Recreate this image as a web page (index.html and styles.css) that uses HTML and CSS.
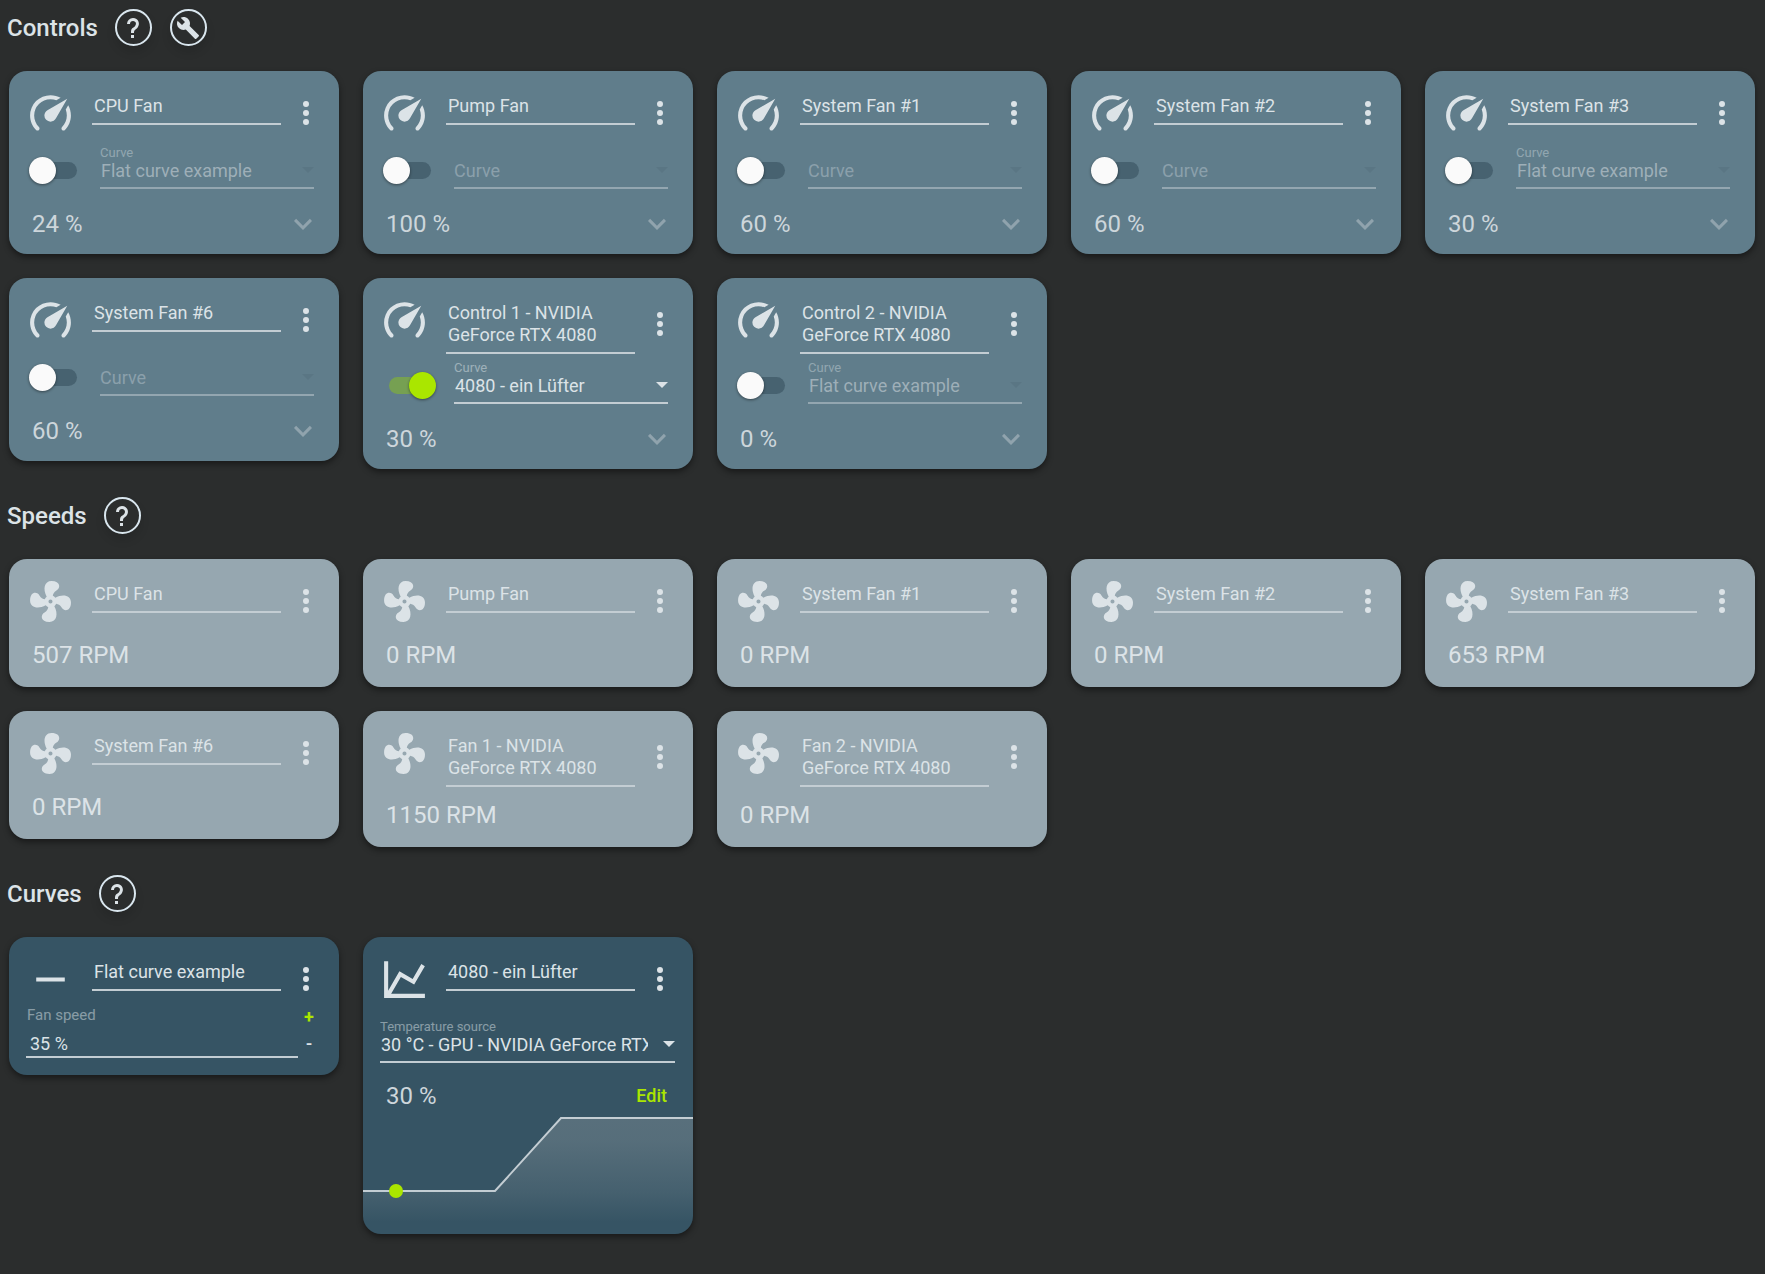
FILE: index.html
```html
<!DOCTYPE html>
<html lang="en">
<head>
<meta charset="utf-8">
<meta name="viewport" content="width=device-width, initial-scale=1">
<title>Fan Control</title>
<link rel="stylesheet" href="styles.css">
</head>
<body>
<svg class="sprite" aria-hidden="true">
  <symbol id="gauge" viewBox="0 0 24 24"><path d="M12,16A3,3 0 0,1 9,13C9,11.88 9.61,10.9 10.5,10.39L20.21,4.77L14.68,14.35C14.18,15.33 13.17,16 12,16M12,3C13.81,3 15.5,3.5 16.97,4.32L14.87,5.53C14,5.19 13,5 12,5A8,8 0 0,0 4,13C4,15.21 4.89,17.21 6.34,18.65H6.35C6.74,19.04 6.74,19.67 6.35,20.06C5.96,20.45 5.32,20.45 4.93,20.07V20.07C3.12,18.26 2,15.76 2,13A10,10 0 0,1 12,3M22,13C22,15.76 20.88,18.26 19.07,20.07V20.07C18.68,20.45 18.05,20.45 17.66,20.06C17.27,19.67 17.27,19.04 17.66,18.65V18.65C19.11,17.2 20,15.21 20,13C20,12 19.81,11 19.46,10.1L20.67,8C21.5,9.5 22,11.18 22,13Z"/></symbol>
  <symbol id="fan" viewBox="0 0 24 24"><path d="M12,11A1,1 0 0,0 11,12A1,1 0 0,0 12,13A1,1 0 0,0 13,12A1,1 0 0,0 12,11M12.5,2C17,2 17.11,5.57 14.75,6.75C13.76,7.24 13.32,8.29 13.13,9.22C13.61,9.42 14.03,9.73 14.35,10.13C18.05,8.13 22.03,8.92 22.03,12.5C22.03,17 18.46,17.1 17.28,14.73C16.78,13.74 15.72,13.3 14.79,13.11C14.59,13.59 14.28,14 13.88,14.34C15.87,18.03 15.08,22 11.5,22C7,22 6.91,18.42 9.27,17.24C10.25,16.75 10.69,15.71 10.89,14.79C10.4,14.59 9.97,14.27 9.65,13.87C5.96,15.85 2,15.07 2,11.5C2,7 5.56,6.89 6.74,9.26C7.24,10.25 8.29,10.68 9.22,10.87C9.41,10.39 9.73,9.97 10.14,9.65C8.15,5.96 8.94,2 12.5,2Z"/></symbol>
  <symbol id="chart" viewBox="0 0 24 24"><path d="M16,11.78L20.24,4.45L21.97,5.45L16.74,14.5L10.23,10.75L5.46,19H22V21H2V3H4V17.54L9.5,8L16,11.78Z"/></symbol>
  <symbol id="flat" viewBox="0 0 24 24"><path d="M19,13H5V11H19V13Z"/></symbol>
  <symbol id="dots" viewBox="0 0 24 24"><path d="M12,16A2,2 0 0,1 14,18A2,2 0 0,1 12,20A2,2 0 0,1 10,18A2,2 0 0,1 12,16M12,10A2,2 0 0,1 14,12A2,2 0 0,1 12,14A2,2 0 0,1 10,12A2,2 0 0,1 12,10M12,4A2,2 0 0,1 14,6A2,2 0 0,1 12,8A2,2 0 0,1 10,6A2,2 0 0,1 12,4Z"/></symbol>
  <symbol id="chevron" viewBox="0 0 24 24"><path d="M7.41,8.58L12,13.17L16.59,8.58L18,10L12,16L6,10L7.41,8.58Z"/></symbol>
  <symbol id="help" viewBox="0 0 24 24"><path d="M10,19H13V22H10V19M12,2C17.35,2.22 19.68,7.62 16.5,11.67C15.67,12.67 14.33,13.33 13.67,14.17C13,15 13,16 13,17H10C10,15.33 10,13.92 10.67,12.92C11.33,11.92 12.67,11.33 13.5,10.67C15.92,8.43 15.32,5.26 12,5A3,3 0 0,0 9,8H6A6,6 0 0,1 12,2Z"/></symbol>
  <symbol id="wrench" viewBox="0 0 24 24"><path d="M22.7,19L13.6,9.9C14.5,7.6 14,4.9 12.1,3C10.1,1 7.1,0.6 4.7,1.7L9,6L6,9L1.6,4.7C0.4,7.1 0.9,10.1 2.9,12.1C4.8,14 7.5,14.5 9.8,13.6L18.9,22.7C19.3,23.1 19.9,23.1 20.3,22.7L22.6,20.4C23.1,20 23.1,19.3 22.7,19Z"/></symbol>
</svg>

<main class="page">
  <section class="section">
    <header class="section-head">
      <h2>Controls</h2>
      <button class="round" type="button" aria-label="Help on controls"><svg><use href="#help"/></svg></button>
      <button class="round" type="button" aria-label="Set up controls"><svg><use href="#wrench"/></svg></button>
    </header>
    <div class="cards">
      <article class="card control">
        <div class="card-head">
          <svg class="kind"><use href="#gauge"/></svg>
          <textarea class="name" rows="1" aria-label="Name">CPU Fan</textarea>
          <button class="more" type="button" aria-label="More"><svg><use href="#dots"/></svg></button>
        </div>
        <div class="assign">
          <input class="toggle" type="checkbox" aria-label="Enable CPU Fan">
          <div class="field"><label for="c1">Curve</label><select id="c1" disabled><option>Flat curve example</option></select></div>
        </div>
        <div class="status"><output>24 %</output><button class="expand" type="button" aria-label="Expand"><svg><use href="#chevron"/></svg></button></div>
      </article>
      <article class="card control">
        <div class="card-head">
          <svg class="kind"><use href="#gauge"/></svg>
          <textarea class="name" rows="1" aria-label="Name">Pump Fan</textarea>
          <button class="more" type="button" aria-label="More"><svg><use href="#dots"/></svg></button>
        </div>
        <div class="assign">
          <input class="toggle" type="checkbox" aria-label="Enable Pump Fan">
          <div class="field empty"><select aria-label="Curve" disabled><option>Curve</option></select></div>
        </div>
        <div class="status"><output>100 %</output><button class="expand" type="button" aria-label="Expand"><svg><use href="#chevron"/></svg></button></div>
      </article>
      <article class="card control">
        <div class="card-head">
          <svg class="kind"><use href="#gauge"/></svg>
          <textarea class="name" rows="1" aria-label="Name">System Fan #1</textarea>
          <button class="more" type="button" aria-label="More"><svg><use href="#dots"/></svg></button>
        </div>
        <div class="assign">
          <input class="toggle" type="checkbox" aria-label="Enable System Fan #1">
          <div class="field empty"><select aria-label="Curve" disabled><option>Curve</option></select></div>
        </div>
        <div class="status"><output>60 %</output><button class="expand" type="button" aria-label="Expand"><svg><use href="#chevron"/></svg></button></div>
      </article>
      <article class="card control">
        <div class="card-head">
          <svg class="kind"><use href="#gauge"/></svg>
          <textarea class="name" rows="1" aria-label="Name">System Fan #2</textarea>
          <button class="more" type="button" aria-label="More"><svg><use href="#dots"/></svg></button>
        </div>
        <div class="assign">
          <input class="toggle" type="checkbox" aria-label="Enable System Fan #2">
          <div class="field empty"><select aria-label="Curve" disabled><option>Curve</option></select></div>
        </div>
        <div class="status"><output>60 %</output><button class="expand" type="button" aria-label="Expand"><svg><use href="#chevron"/></svg></button></div>
      </article>
      <article class="card control">
        <div class="card-head">
          <svg class="kind"><use href="#gauge"/></svg>
          <textarea class="name" rows="1" aria-label="Name">System Fan #3</textarea>
          <button class="more" type="button" aria-label="More"><svg><use href="#dots"/></svg></button>
        </div>
        <div class="assign">
          <input class="toggle" type="checkbox" aria-label="Enable System Fan #3">
          <div class="field"><label for="c5">Curve</label><select id="c5" disabled><option>Flat curve example</option></select></div>
        </div>
        <div class="status"><output>30 %</output><button class="expand" type="button" aria-label="Expand"><svg><use href="#chevron"/></svg></button></div>
      </article>
      <article class="card control">
        <div class="card-head">
          <svg class="kind"><use href="#gauge"/></svg>
          <textarea class="name" rows="1" aria-label="Name">System Fan #6</textarea>
          <button class="more" type="button" aria-label="More"><svg><use href="#dots"/></svg></button>
        </div>
        <div class="assign">
          <input class="toggle" type="checkbox" aria-label="Enable System Fan #6">
          <div class="field empty"><select aria-label="Curve" disabled><option>Curve</option></select></div>
        </div>
        <div class="status"><output>60 %</output><button class="expand" type="button" aria-label="Expand"><svg><use href="#chevron"/></svg></button></div>
      </article>
      <article class="card control">
        <div class="card-head">
          <svg class="kind"><use href="#gauge"/></svg>
          <textarea class="name" rows="2" aria-label="Name">Control 1 - NVIDIA GeForce RTX 4080</textarea>
          <button class="more" type="button" aria-label="More"><svg><use href="#dots"/></svg></button>
        </div>
        <div class="assign">
          <input class="toggle" type="checkbox" aria-label="Enable Control 1" checked>
          <div class="field"><label for="c7">Curve</label><select id="c7"><option>4080 - ein Lüfter</option><option>Flat curve example</option></select></div>
        </div>
        <div class="status"><output>30 %</output><button class="expand" type="button" aria-label="Expand"><svg><use href="#chevron"/></svg></button></div>
      </article>
      <article class="card control">
        <div class="card-head">
          <svg class="kind"><use href="#gauge"/></svg>
          <textarea class="name" rows="2" aria-label="Name">Control 2 - NVIDIA GeForce RTX 4080</textarea>
          <button class="more" type="button" aria-label="More"><svg><use href="#dots"/></svg></button>
        </div>
        <div class="assign">
          <input class="toggle" type="checkbox" aria-label="Enable Control 2">
          <div class="field"><label for="c8">Curve</label><select id="c8" disabled><option>Flat curve example</option></select></div>
        </div>
        <div class="status"><output>0 %</output><button class="expand" type="button" aria-label="Expand"><svg><use href="#chevron"/></svg></button></div>
      </article>
    </div>
  </section>

  <section class="section">
    <header class="section-head">
      <h2>Speeds</h2>
      <button class="round" type="button" aria-label="Help on speeds"><svg><use href="#help"/></svg></button>
    </header>
    <div class="cards">
      <article class="card speed">
        <div class="card-head">
          <svg class="kind"><use href="#fan"/></svg>
          <textarea class="name" rows="1" aria-label="Name">CPU Fan</textarea>
          <button class="more" type="button" aria-label="More"><svg><use href="#dots"/></svg></button>
        </div>
        <div class="status"><output>507 RPM</output></div>
      </article>
      <article class="card speed">
        <div class="card-head">
          <svg class="kind"><use href="#fan"/></svg>
          <textarea class="name" rows="1" aria-label="Name">Pump Fan</textarea>
          <button class="more" type="button" aria-label="More"><svg><use href="#dots"/></svg></button>
        </div>
        <div class="status"><output>0 RPM</output></div>
      </article>
      <article class="card speed">
        <div class="card-head">
          <svg class="kind"><use href="#fan"/></svg>
          <textarea class="name" rows="1" aria-label="Name">System Fan #1</textarea>
          <button class="more" type="button" aria-label="More"><svg><use href="#dots"/></svg></button>
        </div>
        <div class="status"><output>0 RPM</output></div>
      </article>
      <article class="card speed">
        <div class="card-head">
          <svg class="kind"><use href="#fan"/></svg>
          <textarea class="name" rows="1" aria-label="Name">System Fan #2</textarea>
          <button class="more" type="button" aria-label="More"><svg><use href="#dots"/></svg></button>
        </div>
        <div class="status"><output>0 RPM</output></div>
      </article>
      <article class="card speed">
        <div class="card-head">
          <svg class="kind"><use href="#fan"/></svg>
          <textarea class="name" rows="1" aria-label="Name">System Fan #3</textarea>
          <button class="more" type="button" aria-label="More"><svg><use href="#dots"/></svg></button>
        </div>
        <div class="status"><output>653 RPM</output></div>
      </article>
      <article class="card speed">
        <div class="card-head">
          <svg class="kind"><use href="#fan"/></svg>
          <textarea class="name" rows="1" aria-label="Name">System Fan #6</textarea>
          <button class="more" type="button" aria-label="More"><svg><use href="#dots"/></svg></button>
        </div>
        <div class="status"><output>0 RPM</output></div>
      </article>
      <article class="card speed">
        <div class="card-head">
          <svg class="kind"><use href="#fan"/></svg>
          <textarea class="name" rows="2" aria-label="Name">Fan 1 - NVIDIA GeForce RTX 4080</textarea>
          <button class="more" type="button" aria-label="More"><svg><use href="#dots"/></svg></button>
        </div>
        <div class="status"><output>1150 RPM</output></div>
      </article>
      <article class="card speed">
        <div class="card-head">
          <svg class="kind"><use href="#fan"/></svg>
          <textarea class="name" rows="2" aria-label="Name">Fan 2 - NVIDIA GeForce RTX 4080</textarea>
          <button class="more" type="button" aria-label="More"><svg><use href="#dots"/></svg></button>
        </div>
        <div class="status"><output>0 RPM</output></div>
      </article>
    </div>
  </section>

  <section class="section">
    <header class="section-head">
      <h2>Curves</h2>
      <button class="round" type="button" aria-label="Help on curves"><svg><use href="#help"/></svg></button>
    </header>
    <div class="cards">
      <article class="card curve">
        <div class="card-head">
          <svg class="kind"><use href="#flat"/></svg>
          <textarea class="name" rows="1" aria-label="Name">Flat curve example</textarea>
          <button class="more" type="button" aria-label="More"><svg><use href="#dots"/></svg></button>
        </div>
        <div class="amount">
          <div class="amount-field"><label for="flat-speed">Fan speed</label><input id="flat-speed" type="text" value="35 %"></div>
          <div class="steps">
            <button class="step up" type="button" aria-label="Increase">+</button>
            <button class="step" type="button" aria-label="Decrease">-</button>
          </div>
        </div>
      </article>
      <article class="card curve">
        <div class="card-head">
          <svg class="kind"><use href="#chart"/></svg>
          <textarea class="name" rows="1" aria-label="Name">4080 - ein Lüfter</textarea>
          <button class="more" type="button" aria-label="More"><svg><use href="#dots"/></svg></button>
        </div>
        <div class="source">
          <div class="field"><label for="src">Temperature source</label><select id="src"><option>30 °C - GPU - NVIDIA GeForce RTX 4080</option></select></div>
        </div>
        <div class="status"><output>30 %</output><button class="edit" type="button">Edit</button></div>
        <svg class="graph" viewBox="0 0 330 121" preserveAspectRatio="none" role="img" aria-label="Fan curve">
          <defs>
            <linearGradient id="fade" x1="0" y1="0" x2="0" y2="1">
              <stop offset="0" stop-color="#f4ece8" stop-opacity=".18"/>
              <stop offset=".2" stop-color="#f4ece8" stop-opacity=".17"/>
              <stop offset=".64" stop-color="#f4ece8" stop-opacity=".08"/>
              <stop offset=".9" stop-color="#f4ece8" stop-opacity="0"/>
            </linearGradient>
          </defs>
          <path class="area" d="M0,78H132L198,5H330V121H0Z"/>
          <path class="line" d="M0,78H132L198,5H330"/>
          <path class="point" d="M33,78h0"/>
        </svg>
      </article>
    </div>
  </section>
</main>
</body>
</html>
```
FILE: styles.css
```css
:root {
  --bg: #2b2d2d;
  --control: #607d8b;
  --speed: #96a7b0;
  --curve: #365464;
  --text: #dce3e7;
  --soft: #cdd6db;
  --rule: #c3cdd3;
  --lime: #aae600;
}

* {
  box-sizing: border-box;
}

body {
  margin: 0;
  background: var(--bg);
  color: var(--text);
  font: 18px/22px Roboto, "Liberation Sans", sans-serif;
}

button,
input,
select,
textarea {
  margin: 0;
  padding: 0;
  border: 0;
  border-radius: 0;
  background: none;
  color: inherit;
  font: inherit;
}

svg {
  display: block;
  fill: currentColor;
}

.sprite {
  display: none;
}

.page {
  display: flex;
  flex-direction: column;
  gap: 28px;
  padding: 9px 10px 38px 9px;
}

.section {
  display: flex;
  flex-direction: column;
  gap: 25px;
}

.section-head {
  display: flex;
  align-items: center;
  gap: 17px;
  margin-left: -2px;
}

.section-head h2 {
  margin: 0;
  font-size: 24px;
  font-weight: 500;
  line-height: 28px;
}

.round {
  display: grid;
  place-items: center;
  width: 37px;
  height: 37px;
  border: 2px solid #d9e6ee;
  border-radius: 50%;
  box-shadow: 0 6px 10px rgba(0, 0, 0, .12);
}

.round + .round {
  margin-left: 1px;
}

.round svg {
  width: 24px;
  height: 24px;
}

.cards {
  display: grid;
  grid-template-columns: repeat(auto-fill, minmax(300px, 1fr));
  align-items: start;
  gap: 24px;
}

.card {
  overflow: hidden;
  padding-top: 16px;
  border-radius: 18px;
  box-shadow: 0 3px 6px rgba(0, 0, 0, .45);
}

.control {
  padding-bottom: 3px;
  background: var(--control);
}

.speed {
  padding-bottom: 12px;
  background: var(--speed);
}

.curve {
  background: var(--curve);
}

/* Card title row */

.card-head {
  display: flex;
  min-height: 52px;
  padding: 0 15px 0 17px;
}

.kind {
  flex: none;
  width: 49px;
  height: 49px;
  margin: 2px 17px 0 0;
}

.name {
  flex: 1;
  align-self: flex-start;
  min-width: 0;
  margin-top: 8px;
  padding: 0 7px 6px 2px;
  border-bottom: 2px solid var(--rule);
  resize: none;
  overflow: hidden;
}

.more {
  align-self: center;
  margin-left: 7px;
}

.more svg,
.expand svg {
  width: 36px;
  height: 36px;
}

/* Switch and drop-down */

.assign {
  display: flex;
  align-items: flex-end;
  gap: 18px;
  margin-top: 8px;
  padding: 0 25px 0 20px;
}

.toggle {
  appearance: none;
  display: grid;
  flex: none;
  align-items: center;
  width: 53px;
  height: 38px;
}

.toggle::before,
.toggle::after {
  content: "";
  grid-area: 1 / 1;
}

.toggle::before {
  height: 17px;
  margin: 0 5px 0 6px;
  border-radius: 9px;
  background: #476270;
}

.toggle::after {
  width: 27px;
  height: 27px;
  border-radius: 50%;
  background: #fafafa;
  box-shadow: 0 1px 3px rgba(0, 0, 0, .45);
}

.toggle:checked::before {
  background: #76a052;
}

.toggle:checked::after {
  justify-self: end;
  background: var(--lime);
}

.field {
  display: flex;
  flex: 1;
  flex-direction: column;
  justify-content: flex-end;
  min-width: 0;
  height: 42px;
  position: relative;
}

.field label {
  font-size: 13px;
  line-height: 12px;
  opacity: .5;
}

.field select {
  appearance: none;
  width: 100%;
  height: 30px;
  padding: 0 27px 5px 1px;
  border-bottom: 2px solid var(--rule);
  line-height: 22px;
  opacity: 1;
}

.field::after {
  content: "";
  position: absolute;
  right: 0;
  bottom: 16px;
  border: 6px solid transparent;
  border-top-color: var(--text);
  border-bottom: 0;
  pointer-events: none;
}

.field:has(select:disabled)::after {
  border-top-color: #5a7684;
}

.field:has(select:disabled) label {
  opacity: .4;
}

.field select:disabled {
  border-color: #93a6b0;
  color: #9eafb8;
}

.field.empty select {
  padding-left: 0;
  color: #8ba0ab;
}

/* Reading row */

.status {
  display: flex;
  align-items: center;
  justify-content: space-between;
  padding-left: 23px;
  font-size: 24px;
  line-height: 28px;
  color: var(--soft);
}

.control .status {
  height: 54px;
  margin-top: 8px;
  padding-right: 18px;
}

.speed .status {
  height: 40px;
  margin-top: 8px;
  color: var(--text);
}

.curve .status {
  height: 34px;
  margin-top: 16px;
  padding-right: 26px;
}

.expand {
  color: #90a3ad;
}

.edit {
  color: var(--lime);
  font-size: 18px;
  font-weight: 500;
  line-height: 22px;
}

/* Flat curve */

.amount {
  display: flex;
  align-items: flex-start;
  padding: 0 19px 17px 17px;
}

.amount-field {
  display: flex;
  flex: 1;
  flex-direction: column;
  min-width: 0;
}

.amount-field label {
  padding-left: 1px;
  font-size: 15px;
  line-height: 20px;
  opacity: .5;
}

.amount-field input {
  width: 100%;
  height: 33px;
  padding: 7px 0 2px 4px;
  border-bottom: 2px solid var(--rule);
}

.steps {
  display: flex;
  flex-direction: column;
  gap: 3px;
}

.step {
  width: 22px;
  height: 24px;
  font-weight: 500;
  line-height: 22px;
}

.step.up {
  color: var(--lime);
  font-weight: 700;
}

/* Graph curve */

.source {
  margin-top: 16px;
  padding: 0 18px 0 17px;
}

.graph {
  width: 100%;
  height: 121px;
}

.area {
  fill: url(#fade);
}

.line,
.point {
  fill: none;
  vector-effect: non-scaling-stroke;
}

.line {
  stroke: var(--rule);
  stroke-width: 2px;
}

.point {
  stroke: var(--lime);
  stroke-width: 14px;
  stroke-linecap: round;
}
```
